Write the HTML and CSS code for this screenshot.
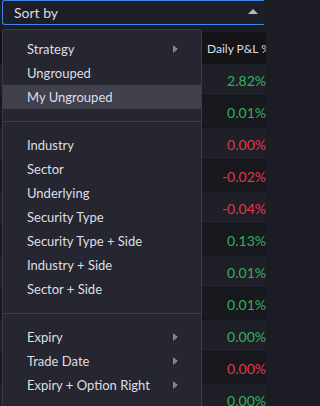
FILE: index.html
```html
<!DOCTYPE html>
<html>
<head>
<meta charset="utf-8">
<link rel="stylesheet" href="styles.css">
</head>
<body>
<div class="page">
  <div class="select">
    <span class="select-label">Sort by</span>
    <span class="select-arrow"></span>
  </div>
  <div class="table">
    <div class="row head"><div class="cell name"></div><div class="cell val">Daily P&amp;L %</div></div>
    <div class="row"><div class="cell name"></div><div class="cell val pos">2.82%</div></div>
    <div class="row"><div class="cell name"></div><div class="cell val pos">0.01%</div></div>
    <div class="row"><div class="cell name"></div><div class="cell val neg">0.00%</div></div>
    <div class="row"><div class="cell name"></div><div class="cell val neg">-0.02%</div></div>
    <div class="row"><div class="cell name"></div><div class="cell val neg">-0.04%</div></div>
    <div class="row"><div class="cell name"></div><div class="cell val pos">0.13%</div></div>
    <div class="row"><div class="cell name"></div><div class="cell val pos">0.01%</div></div>
    <div class="row"><div class="cell name"></div><div class="cell val pos">0.01%</div></div>
    <div class="row"><div class="cell name"></div><div class="cell val pos">0.00%</div></div>
    <div class="row"><div class="cell name"></div><div class="cell val neg">0.00%</div></div>
    <div class="row"><div class="cell name"></div><div class="cell val pos">0.00%</div></div>
  </div>
  <div class="menu">
    <div class="item sub">Strategy</div>
    <div class="item">Ungrouped</div>
    <div class="item active">My Ungrouped</div>
    <div class="sep"></div>
    <div class="item">Industry</div>
    <div class="item">Sector</div>
    <div class="item">Underlying</div>
    <div class="item">Security Type</div>
    <div class="item">Security Type + Side</div>
    <div class="item">Industry + Side</div>
    <div class="item">Sector + Side</div>
    <div class="sep"></div>
    <div class="item sub">Expiry</div>
    <div class="item sub">Trade Date</div>
    <div class="item sub">Expiry + Option Right</div>
  </div>
</div>
</body>
</html>
```
FILE: styles.css
```css
html, body {
  margin: 0;
  padding: 0;
  width: 266px;
  height: 406px;
  background: #1c1c25;
  overflow: hidden;
}
.page {
  position: relative;
  width: 266px;
  height: 406px;
  overflow: hidden;
  font-family: Lato, "Noto Sans", sans-serif;
  font-size: 13px;
  color: #dcdce3;
}
.select {
  margin-left: 2px;
  width: 262px;
  border: 1px solid #3a84ec;
  border-right: none;
  border-radius: 3px 0 0 3px;
  background: #1e1e28;
  display: flex;
  align-items: center;
  padding-left: 11px;
  font-size: 14px;
  box-sizing: border-box;
  height: 25px;
}
.select-label {
  flex: 0 0 auto;
  width: 234px;
}
.select-arrow {
  width: 0;
  height: 0;
  border-left: 5px solid transparent;
  border-right: 5px solid transparent;
  border-bottom: 5px solid #b9b9c2;
  margin-top: -2px;
}
.table {
  margin-top: 7px;
  width: 266px;
}
.row {
  display: flex;
  height: 32px;
  align-items: center;
  background: #1f1f28;
  box-shadow: inset 0 -1px 0 #15151b;
}
.row:nth-child(odd) {
  background: #18181f;
}
.row.head {
  background: #131318;
  box-shadow: none;
}
.cell.name {
  width: 206px;
  flex: 0 0 206px;
}
.cell.val {
  flex: 1;
  min-width: 0;
  text-align: right;
  font-size: 14px;
  white-space: nowrap;
}
.head .cell.val {
  text-align: left;
  padding-left: 1px;
  font-size: 12px;
  color: #dcdce3;
}
.pos { color: #2fb25a; }
.neg { color: #e0394b; }
.menu {
  position: absolute;
  left: 2px;
  top: 29px;
  width: 198px;
  height: 366px;
  padding: 7px 0 6px;
  background: #262631;
  border: 1px solid #3b3b48;
  border-radius: 3px;
}
.item {
  height: 24px;
  display: flex;
  align-items: center;
  padding-left: 24px;
  position: relative;
  color: #dedee5;
}
.item.active {
  background: #41414e;
}
.item.sub::after {
  content: "";
  position: absolute;
  left: 170px;
  top: 8px;
  width: 0;
  height: 0;
  border-top: 4px solid transparent;
  border-bottom: 4px solid transparent;
  border-left: 5px solid #85858f;
}
.sep {
  height: 24px;
  display: flex;
  align-items: center;
}
.sep::before {
  content: "";
  flex: 1;
  height: 1px;
  background: #3d3d4a;
}
```
